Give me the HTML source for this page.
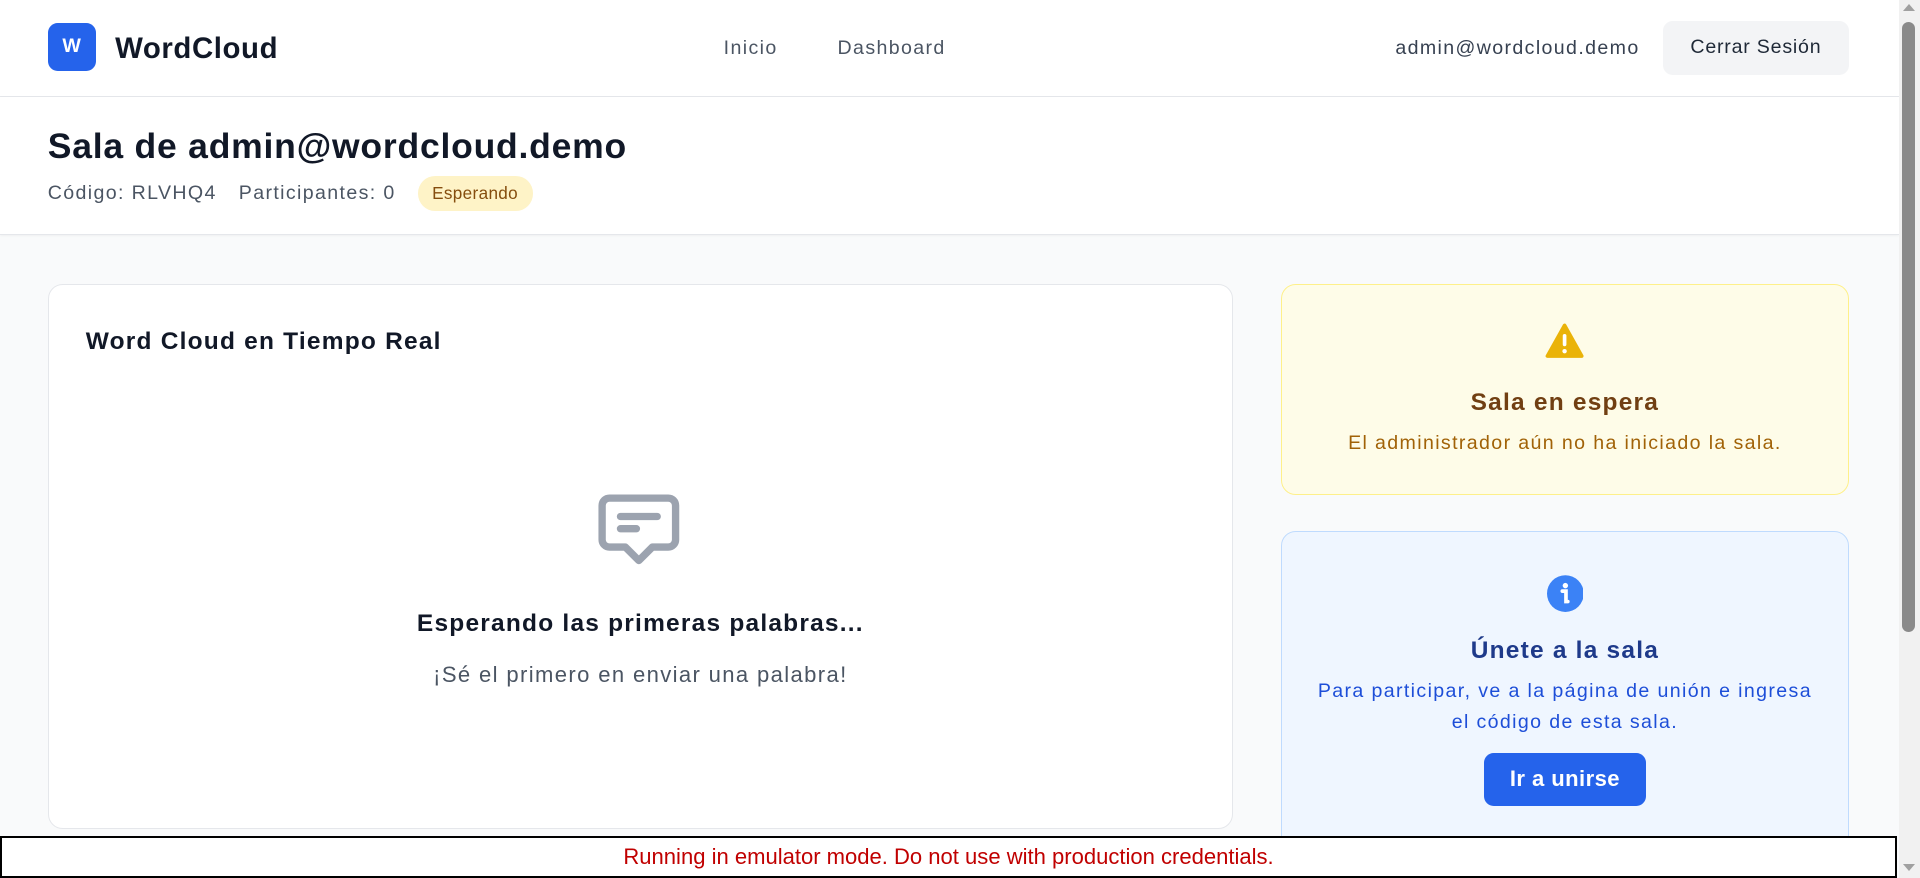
<!DOCTYPE html>
<html><head><meta charset="utf-8">
<style>
html,body{margin:0;padding:0;overflow:hidden;background:#f9fafb;}
#z{zoom:1.22449;width:1568px;height:717px;position:relative;overflow:hidden;font-family:"Liberation Sans",sans-serif;background:#f9fafb;letter-spacing:0.07em;}
.a{position:absolute;}
.c{text-align:center;}
.b{letter-spacing:0.05em;}
</style></head><body><div id="z">
<!-- nav -->
<div class="a" style="left:0;top:0;width:1551px;height:78px;background:#fff;border-bottom:1px solid #e5e7eb;"></div>
<div class="a c" style="left:39px;top:19px;width:39px;height:39px;background:#2563eb;border-radius:8px;color:#fff;font-weight:bold;font-size:16px;line-height:39px;letter-spacing:0;">W</div>
<div class="a" style="left:94px;top:25px;font-size:24px;font-weight:bold;color:#111827;line-height:30px;letter-spacing:0.02em;">WordCloud</div>
<div class="a" style="left:591px;top:29px;font-size:16px;color:#4b5563;line-height:20px;">Inicio</div>
<div class="a" style="left:684px;top:29px;font-size:16px;color:#4b5563;line-height:20px;">Dashboard</div>
<div class="a" style="right:229px;top:29px;font-size:16px;color:#374151;line-height:20px;">admin@wordcloud.demo</div>
<div class="a c" style="left:1358px;top:17px;width:152px;height:44px;background:#f3f4f6;border-radius:8px;font-size:16px;color:#1f2937;line-height:44px;letter-spacing:0.04em;">Cerrar Sesión</div>
<!-- header -->
<div class="a" style="left:0;top:79px;width:1551px;height:112px;background:#fff;border-bottom:1px solid #e5e7eb;box-shadow:0 1px 2px rgba(0,0,0,.05);"></div>
<div class="a" style="left:39px;top:101px;font-size:29px;font-weight:bold;color:#111827;line-height:36px;letter-spacing:0.022em;">Sala de admin@wordcloud.demo</div>
<div class="a" style="left:39px;top:148px;font-size:16px;color:#4b5563;line-height:20px;">Código: RLVHQ4</div>
<div class="a" style="left:195px;top:148px;font-size:16px;color:#4b5563;line-height:20px;">Participantes: 0</div>
<div class="a c" style="left:341px;top:144px;width:94px;height:28px;background:#fef3c7;border-radius:14px;font-size:14px;color:#854d0e;line-height:28px;letter-spacing:0.02em;">Esperando</div>
<!-- left card -->
<div class="a" style="left:39px;top:232px;width:966px;height:443px;background:#fff;border:1px solid #e5e7eb;border-radius:12px;"></div>
<div class="a b" style="left:70px;top:267px;font-size:20px;font-weight:bold;color:#111827;line-height:24px;">Word Cloud en Tiempo Real</div>
<svg class="a" style="left:487px;top:402px" width="70" height="62" viewBox="0 0 70 62" fill="none" stroke="#9ca3af" stroke-width="6" stroke-linecap="round" stroke-linejoin="round"><path d="M11 5h48a6 6 0 0 1 6 6v28a6 6 0 0 1-6 6H46l-11 11-11-11H11a6 6 0 0 1-6-6V11a6 6 0 0 1 6-6z"/><path d="M20 20h30M20 30h13"/></svg>
<div class="a c b" style="left:40px;top:497px;width:966px;font-size:20px;font-weight:bold;color:#111827;line-height:24px;">Esperando las primeras palabras...</div>
<div class="a c" style="left:40px;top:541px;width:966px;font-size:18px;color:#4b5563;line-height:22px;">¡Sé el primero en enviar una palabra!</div>
<!-- yellow card -->
<div class="a" style="left:1046px;top:232px;width:462px;height:171px;background:#fefce8;border:1px solid #fef08a;border-radius:12px;"></div>
<svg class="a" style="left:1262px;top:264px" width="32" height="30" viewBox="0 0 32 30"><path d="M16 2L2 27h28z" fill="#eab308" stroke="#eab308" stroke-width="3" stroke-linejoin="round"/><rect x="14.5" y="9" width="3" height="10" rx="1.5" fill="#fff"/><circle cx="16" cy="23" r="1.8" fill="#fff"/></svg>
<div class="a c b" style="left:1046px;top:317px;width:464px;font-size:20px;font-weight:bold;color:#713f12;line-height:24px;">Sala en espera</div>
<div class="a c" style="left:1046px;top:352px;width:464px;font-size:16px;color:#a16207;line-height:20px;">El administrador aún no ha iniciado la sala.</div>
<!-- blue card -->
<div class="a" style="left:1046px;top:434px;width:462px;height:260px;background:#eff6ff;border:1px solid #bfdbfe;border-radius:12px;"></div>
<svg class="a" style="left:1263px;top:469px" width="30" height="32" viewBox="0 0 30 32"><circle cx="15" cy="16" r="15" fill="#3b82f6"/><circle cx="15" cy="9.5" r="2.2" fill="#fff"/><path d="M12.5 14h3v8.5h1.5" stroke="#fff" stroke-width="3" fill="none" stroke-linecap="round"/></svg>
<div class="a c b" style="left:1046px;top:519px;width:464px;font-size:20px;font-weight:bold;color:#1e3a8a;line-height:24px;">Únete a la sala</div>
<div class="a c" style="left:1076px;top:552px;width:404px;font-size:16px;color:#1d4ed8;line-height:25px;">Para participar, ve a la página de unión e ingresa el código de esta sala.</div>
<div class="a c" style="left:1212px;top:615px;width:132px;height:43px;background:#2563eb;border-radius:8px;font-size:18px;color:#fff;line-height:43px;font-weight:bold;letter-spacing:0.02em;">Ir a unirse</div>
<!-- banner -->
<div class="a c" style="left:0;top:683px;width:1546px;height:31px;background:#fff;border:2px solid #000;color:#c00000;font-size:18px;line-height:31px;letter-spacing:0;">Running in emulator mode. Do not use with production credentials.</div>
<!-- scrollbar -->
<div class="a" style="left:1551px;top:0;width:17px;height:717px;background:#f1f1f1;"></div>
<div class="a" style="left:1553px;top:18px;width:11px;height:498px;background:#8a8a8a;border-radius:6px;"></div>
<div class="a" style="left:1554px;top:3px;width:0;height:0;border-left:5px solid transparent;border-right:5px solid transparent;border-bottom:6px solid #a0a0a0;"></div>
<div class="a" style="left:1554px;top:706px;width:0;height:0;border-left:5px solid transparent;border-right:5px solid transparent;border-top:6px solid #a0a0a0;"></div>
</div></body></html>
